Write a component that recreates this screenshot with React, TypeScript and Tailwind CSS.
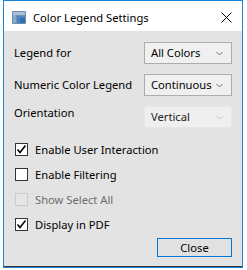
import React from "react";

const font = { fontFamily: '"Noto Sans", "Open Sans", sans-serif' };

function Chevron({ disabled }: { disabled?: boolean }) {
  return (
    <svg width="7" height="5" viewBox="0 0 7 5" className="shrink-0">
      <path d="M0.5 1 L3.5 4 L6.5 1" fill="none" stroke={disabled ? "#c8c8c8" : "#707070"} strokeWidth="1" />
    </svg>
  );
}

function Select({ value, disabled }: { value: string; disabled?: boolean }) {
  return (
    <div
      className={
        "w-[88px] h-[22px] flex items-center justify-between pl-[6px] pr-[8px] border " +
        (disabled ? "border-[#e6e6e6] bg-[#efefef]" : "border-[#adadad] bg-[#f0f0f0]")
      }
    >
      <span className={"text-[11.2px] leading-none " + (disabled ? "text-[#222]" : "text-black")}>{value}</span>
      <Chevron disabled={disabled} />
    </div>
  );
}

function Check({ label, checked, disabled }: { label: string; checked?: boolean; disabled?: boolean }) {
  return (
    <div className="flex items-center h-[13px] gap-[7px]">
      <div
        className={
          "w-[13px] h-[13px] border flex items-center justify-center " +
          (disabled ? "border-[#cccccc] bg-[#e6e6e6]" : "border-[#333333] bg-white")
        }
      >
        {checked && (
          <svg width="11" height="11" viewBox="0 0 11 11">
            <path d="M1.5 5.5 L4 8.5 L9.5 1.5" fill="none" stroke="#000" strokeWidth="1.6" />
          </svg>
        )}
      </div>
      <span className={"text-[11.2px] leading-none " + (disabled ? "text-[#6d6d6d]" : "text-black")}>{label}</span>
    </div>
  );
}

export default function App() {
  return (
    <div className="w-[247px] h-[270px] bg-white" style={font}>
      <div className="ml-[3px] w-[240px] h-[268px] border border-[#1883d7] flex flex-col">
        <div className="h-[30px] bg-white flex items-center shrink-0">
          <svg width="14" height="13" viewBox="0 0 14 13" className="ml-[8px] mt-[3px]">
            <rect x="0" y="0" width="14" height="13" rx="1" fill="#6f8fb0" />
            <rect x="1" y="1" width="12" height="3" fill="#a9c0d8" />
            <rect x="1" y="4" width="3" height="8" fill="#8aa8c7" />
            <rect x="5" y="5" width="8" height="7" fill="#4f83c0" />
            <rect x="8" y="7" width="5" height="5" fill="#2f6fb3" />
          </svg>
          <span className="ml-[7px] mt-[3px] text-[11.2px] text-black leading-none">Color Legend Settings</span>
          <svg width="11" height="11" viewBox="0 0 11 11" className="ml-auto mr-[10px] mt-[2px]">
            <path d="M0.5 0.5 L10.5 10.5 M10.5 0.5 L0.5 10.5" stroke="#000" strokeWidth="1" />
          </svg>
        </div>
        <div className="flex-1 bg-[#e3e3e3] flex flex-col pl-[10px] pr-[10px] border-b border-b-[#3a3a3a]">
          <div className="flex items-center justify-between mt-[11px]">
            <span className="text-[11.2px] text-black">Legend for</span>
            <Select value="All Colors" />
          </div>
          <div className="flex items-center justify-between mt-[10px]">
            <span className="text-[11.2px] text-black">Numeric Color Legend</span>
            <Select value="Continuous" />
          </div>
          <div className="flex justify-between mt-[10px]">
            <span className="text-[11.2px] text-black mt-[-1px]">Orientation</span>
            <Select value="Vertical" disabled />
          </div>
          <div className="flex flex-col gap-[12px] mt-[15px] pl-[1px]">
            <Check label="Enable User Interaction" checked />
            <Check label="Enable Filtering" />
            <Check label="Show Select All" disabled />
            <Check label="Display in PDF" checked />
          </div>
          <div className="flex justify-end mt-[7px]">
            <div className="w-[75px] h-[19px] border border-[#0078d7] bg-[#e1e1e1] flex items-center justify-center">
              <span className="text-[11.2px] text-black leading-none">Close</span>
            </div>
          </div>
        </div>
      </div>
    </div>
  );
}
